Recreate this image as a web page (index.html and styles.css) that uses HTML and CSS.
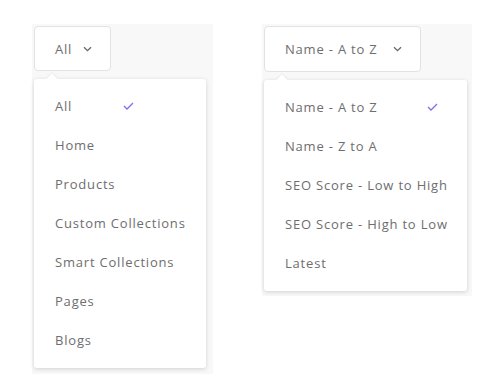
FILE: index.html
```html
<!DOCTYPE html>
<html lang="en">
<head>
    <meta charset="UTF-8">
    <meta name="viewport" content="width=device-width, initial-scale=1.0">
    <title>Filters</title>
    <link rel="stylesheet" href="styles.css">
</head>
<body>
    <div class="page">
        <!-- Type filter -->
        <div class="panel panel-left">
            <div class="trigger">
                <span>All</span>
                <svg class="chevron" width="9" height="6" viewBox="0 0 9 6"><path d="M1 1.2 L4.5 4.6 L8 1.2" fill="none" stroke="#666" stroke-width="1.3"/></svg>
            </div>
            <ul class="menu menu-left">
                <li class="selected">All <svg class="check" width="11" height="8" viewBox="0 0 11 8"><path d="M1 4 L4 7 L10 1" fill="none" stroke="#7c6cf0" stroke-width="1.3"/></svg></li>
                <li>Home</li>
                <li>Products</li>
                <li>Custom Collections</li>
                <li>Smart Collections</li>
                <li>Pages</li>
                <li>Blogs</li>
            </ul>
        </div>

        <!-- Sort -->
        <div class="panel panel-right">
            <div class="trigger">
                <span>Name - A to Z</span>
                <svg class="chevron" width="9" height="6" viewBox="0 0 9 6"><path d="M1 1.2 L4.5 4.6 L8 1.2" fill="none" stroke="#666" stroke-width="1.3"/></svg>
            </div>
            <ul class="menu menu-right">
                <li class="selected">Name - A to Z <svg class="check" width="11" height="8" viewBox="0 0 11 8"><path d="M1 4 L4 7 L10 1" fill="none" stroke="#7c6cf0" stroke-width="1.3"/></svg></li>
                <li>Name - Z to A</li>
                <li>SEO Score - Low to High</li>
                <li>SEO Score - High to Low</li>
                <li>Latest</li>
            </ul>
        </div>
    </div>
</body>
</html>
```

FILE: styles.css
```css
body {
    margin: 0;
    background-color: #ffffff;
    font-family: "Open Sans", "Noto Sans", sans-serif;
    color: #6e6e6e;
}

.page {
    display: flex;
    padding: 24px 0 0 32px;
    gap: 49px;
    align-items: flex-start;
}

.panel {
    background-color: #f8f8f8;
    padding: 2px;
    box-sizing: border-box;
}

.panel-left {
    width: 181px;
    height: 350px;
}

.panel-right {
    width: 210px;
    height: 272px;
}

.trigger {
    display: flex;
    align-items: center;
    justify-content: space-between;
    height: 45px;
    padding: 0 18px 0 20px;
    background-color: #ffffff;
    border: 1px solid #e2e2e2;
    border-radius: 4px;
    box-sizing: border-box;
    font-size: 13px;
    letter-spacing: 0.8px;
}

.panel-left .trigger {
    width: 77px;
}

.panel-right .trigger {
    width: 157px;
    height: 46px;
}

.menu {
    position: relative;
    list-style: none;
    margin: 8px 0 0 0;
    padding: 7px 0 9px 0;
    background-color: #ffffff;
    border-radius: 3px;
    box-shadow: 0 1px 4px rgba(0,0,0,0.16);
}

.menu::before {
    content: "";
    position: absolute;
    top: -4px;
    left: 14px;
    width: 8px;
    height: 8px;
    background-color: #ffffff;
    transform: rotate(45deg);
    box-shadow: -1px -1px 1px rgba(0,0,0,0.05);
}

.menu-left {
    width: 172px;
}

.menu-right {
    width: 203px;
}

.menu li {
    position: relative;
    display: flex;
    align-items: center;
    height: 39px;
    padding-left: 21px;
    font-size: 13px;
    letter-spacing: 0.8px;
}

.check {
    position: absolute;
    top: 16px;
}

.menu-left .check {
    left: 89px;
}

.menu-right .check {
    left: 163px;
}
```
